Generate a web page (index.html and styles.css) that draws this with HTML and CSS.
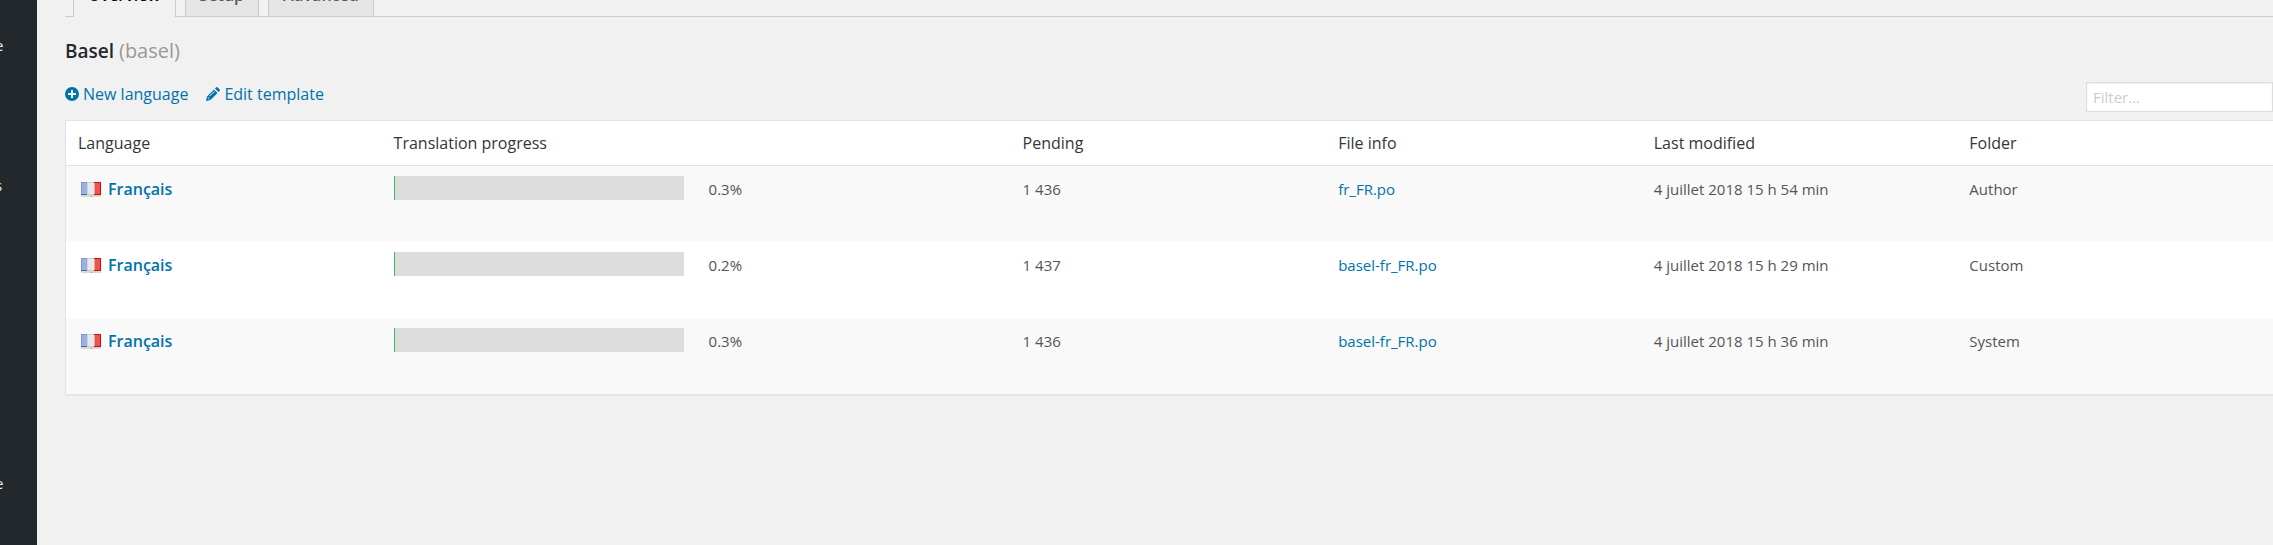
FILE: index.html
```html
<!DOCTYPE html>
<html lang="en">
<head>
  <meta charset="UTF-8">
  <meta name="viewport" content="width=device-width, initial-scale=1.0">
  <title>Basel</title>
  <link rel="stylesheet" href="styles.css">
</head>
<body>
  <svg class="sprite" width="0" height="0" aria-hidden="true">
    <symbol id="flag-fr" viewBox="0 0 20 15">
      <rect width="20" height="15" fill="#d3dccb"/>
      <rect width="7" height="13" fill="#9db1de"/>
      <rect x="6" width="8" height="13" fill="#e8e8e8"/>
      <rect x="13" width="7" height="13" fill="#ea5550"/>
      <path d="M0 .5h6M.5 0v13" stroke="#7f94cf" fill="none"/>
      <path d="M0 12.500h6" stroke="#4a67b5"/>
      <path d="M6 .5h7M6 12.500h7" stroke="#cfcfcf"/>
      <path d="M13 .5h7M19.500 0v13M13 12.500h7" stroke="#d00c0c" fill="none"/>
      <path d="M6.500 1v11" stroke="#c9d2e8"/>
      <path d="M13.500 1v11" stroke="#f0a39f"/>
      <path d="M10 14.500h1" stroke="#8a9a80"/>
    </symbol>
  </svg>

  <div class="wrapper">
    <nav class="admin-menu" aria-label="Menu">
      <a href="#">e</a>
      <a href="#">s</a>
      <a href="#">e</a>
    </nav>

    <main class="content">
      <div class="tabs">
        <a class="tab tab-active" href="#">Overview</a>
        <a class="tab" href="#">Setup</a>
        <a class="tab" href="#">Advanced</a>
      </div>

      <h2>Basel <span>(basel)</span></h2>

      <div class="toolbar">
        <div class="actions">
          <a href="#">
            <svg width="14" height="14" viewBox="0 0 14 14" aria-hidden="true">
              <circle cx="7" cy="7" r="7" fill="#0073aa"/>
              <path d="M7 3v8M3 7h8" stroke="#f1f1f1" stroke-width="2"/>
            </svg>
            New language
          </a>
          <a href="#">
            <svg width="14" height="14" viewBox="0 0 14 14" aria-hidden="true">
              <path d="M0 14l1-4.500 7-7L11.500 6l-7 7z" fill="#0073aa"/>
              <path d="M9 1.500L10.200.300q.6-.5 1.200 0l2.300 2.300q.5.600 0 1.200L12.500 5z" fill="#0073aa"/>
              <path d="M1.800 10.500l1.700 1.700M3.500 9.200l5-5" stroke="#f1f1f1" fill="none"/>
            </svg>
            Edit template
          </a>
        </div>
        <input class="filter" type="text" placeholder="Filter..." aria-label="Filter">
      </div>

      <table>
        <colgroup>
          <col>
          <col class="col-progress">
          <col>
          <col>
          <col>
          <col>
        </colgroup>
        <thead>
          <tr>
            <th>Language</th>
            <th>Translation progress</th>
            <th>Pending</th>
            <th>File info</th>
            <th>Last modified</th>
            <th>Folder</th>
          </tr>
        </thead>
        <tbody>
          <tr>
            <td><a class="language" href="#"><svg width="20" height="15" aria-hidden="true"><use href="#flag-fr"/></svg>Français</a></td>
            <td><div class="progress"><div class="bar"><div style="width: 0.3%"></div></div><span>0.3%</span></div></td>
            <td>1 436</td>
            <td><a href="#">fr_FR.po</a></td>
            <td>4 juillet 2018 15 h 54 min</td>
            <td>Author</td>
          </tr>
          <tr>
            <td><a class="language" href="#"><svg width="20" height="15" aria-hidden="true"><use href="#flag-fr"/></svg>Français</a></td>
            <td><div class="progress"><div class="bar"><div style="width: 0.2%"></div></div><span>0.2%</span></div></td>
            <td>1 437</td>
            <td><a href="#">basel-fr_FR.po</a></td>
            <td>4 juillet 2018 15 h 29 min</td>
            <td>Custom</td>
          </tr>
          <tr>
            <td><a class="language" href="#"><svg width="20" height="15" aria-hidden="true"><use href="#flag-fr"/></svg>Français</a></td>
            <td><div class="progress"><div class="bar"><div style="width: 0.3%"></div></div><span>0.3%</span></div></td>
            <td>1 436</td>
            <td><a href="#">basel-fr_FR.po</a></td>
            <td>4 juillet 2018 15 h 36 min</td>
            <td>System</td>
          </tr>
        </tbody>
      </table>
    </main>
  </div>
</body>
</html>
```

FILE: styles.css
```css
* {
  box-sizing: border-box;
}
body {
  margin: 0;
  font-family: "Segoe UI", "Open Sans", sans-serif;
  font-size: 15px;
  line-height: 24px;
  color: #555;
  background: #f1f1f1;
}
a {
  color: #0073aa;
  text-decoration: none;
}
a:hover {
  color: #00a0d2;
}
.sprite {
  display: block;
}
.wrapper {
  display: flex;
  min-height: 100vh;
  overflow: hidden;
}

/* admin menu */
.admin-menu {
  display: flex;
  flex-direction: column;
  flex: none;
  width: 37px;
  padding-top: 33px;
  background: #23282d;
}
.admin-menu a {
  margin: 0 0 116px -5px;
  color: #eee;
}
.admin-menu a + a {
  margin-bottom: 274px;
}
.admin-menu a:last-child {
  margin-bottom: 0;
}

.content {
  flex: 1;
  min-width: 0;
  padding-left: 28px;
}

/* tabs */
.tabs {
  display: flex;
  align-items: flex-end;
  gap: 9px;
  height: 17px;
  padding-left: 8px;
  border-bottom: 1px solid #ccc;
}
.tab {
  padding: 6px 14px 9px;
  border: 1px solid #ccc;
  border-bottom: none;
  background: #e5e5e5;
  color: #555;
  font-size: 16px;
  font-weight: 600;
}
.tab-active {
  margin-bottom: -1px;
  padding-bottom: 10px;
  background: #f1f1f1;
  color: #000;
}

h2 {
  margin: 19px 0 16px;
  font-size: 19px;
  line-height: 30px;
  font-weight: 600;
  color: #23282d;
}
h2 span {
  font-size: 20px;
  font-weight: 400;
  color: #999;
}

/* links and filter above the table */
.toolbar {
  display: flex;
  justify-content: space-between;
  margin-bottom: 8px;
}
.actions {
  display: flex;
  align-items: flex-start;
  gap: 18px;
}
.actions a {
  display: flex;
  align-items: center;
  gap: 4px;
  font-size: 16px;
}
.filter {
  width: 187px;
  height: 30px;
  padding: 4px 6px;
  border: 1px solid #ddd;
  box-shadow: inset 0 1px 2px rgba(0, 0, 0, 0.07);
  font-family: inherit;
  font-size: 15px;
}
.filter::placeholder {
  color: #ccc;
}

/* translations */
table {
  width: 100%;
  table-layout: fixed;
  border-spacing: 0;
  border: 1px solid #e5e5e5;
  border-right: none;
  background: #fff;
  box-shadow: 0 1px 1px rgba(0, 0, 0, 0.04);
}
.col-progress {
  width: 28.5%;
}
th {
  padding: 10px 12px;
  border-bottom: 1px solid #e1e1e1;
  font-size: 16px;
  font-weight: 400;
  text-align: left;
  color: #32373c;
}
td {
  height: 76px;
  padding: 11px 12px;
  vertical-align: top;
}
tbody tr:nth-child(odd) {
  background: #f9f9f9;
}
.language {
  display: flex;
  align-items: center;
  gap: 7px;
  padding-left: 3px;
  font-size: 16px;
  font-weight: 600;
}
.progress {
  display: grid;
  grid-template-columns: 1fr 1fr;
  gap: 25px;
}
.bar {
  height: 24px;
  margin-top: -1px;
  background: #ddd;
}
.bar div {
  min-width: 1px;
  height: 100%;
  background: #46b450;
}
```
